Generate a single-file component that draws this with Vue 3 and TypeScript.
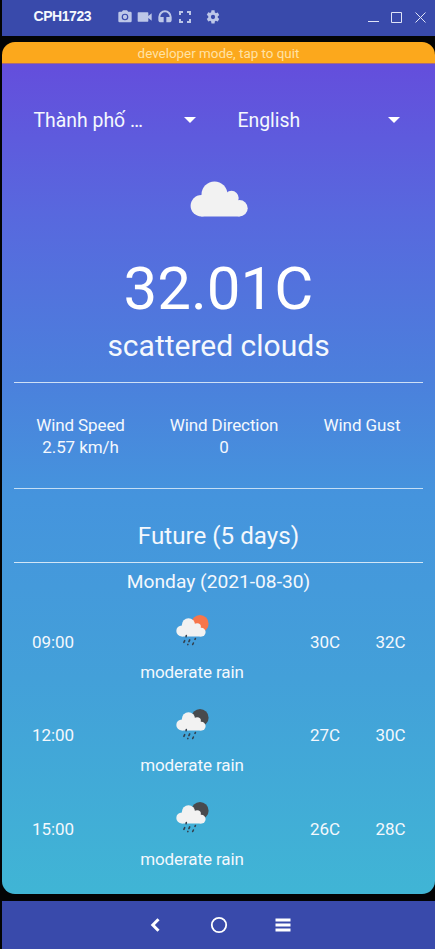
<script setup lang="ts">
interface Forecast {
  time: string
  low: string
  high: string
  summary: string
  disc: 'sun' | 'moon'
}

interface WindStat {
  label: string
  value: string
}

const wind: WindStat[] = [
  { label: 'Wind Speed', value: '2.57 km/h' },
  { label: 'Wind Direction', value: '0' },
  { label: 'Wind Gust', value: '' },
]

const forecasts: Forecast[] = [
  { time: '09:00', low: '30C', high: '32C', summary: 'moderate rain', disc: 'sun' },
  { time: '12:00', low: '27C', high: '30C', summary: 'moderate rain', disc: 'moon' },
  { time: '15:00', low: '26C', high: '28C', summary: 'moderate rain', disc: 'moon' },
]
</script>

<template>
  <div class="window">
    <header class="titlebar">
      <span class="device">CPH1723</span>
      <div class="tools">
        <svg class="tool" viewBox="0 0 24 24"><path d="M9 2 7.200 4H4a2 2 0 0 0-2 2v12a2 2 0 0 0 2 2h16a2 2 0 0 0 2-2V6a2 2 0 0 0-2-2h-3.200L15 2H9zm3 15a5 5 0 1 1 0-10 5 5 0 0 1 0 10zm0-1.800a3.200 3.200 0 1 0 0-6.400 3.200 3.200 0 0 0 0 6.400z" /></svg>
        <svg class="tool" viewBox="0 0 24 24"><path d="M17 10.500V6a1 1 0 0 0-1-1H2a1 1 0 0 0-1 1v12a1 1 0 0 0 1 1h14a1 1 0 0 0 1-1v-4.500l5 4V6.500z" /></svg>
        <svg class="tool" viewBox="0 0 24 24"><path d="M12 2a10 10 0 0 0-10 10v4a4 4 0 0 0 4 4h4v-8H5a7 7 0 0 1 14 0h-5v8h4a4 4 0 0 0 4-4v-4A10 10 0 0 0 12 2z" /></svg>
        <svg class="tool" viewBox="0 0 24 24"><path d="M3 3h6v3H6v3H3zM15 3h6v6h-3V6h-3zM3 15h3v3h3v3H3zM18 15h3v6h-6v-3h3z" /></svg>
        <svg class="tool gear" viewBox="0 0 24 24"><path d="M19.140 12.940c.04-.3.060-.61.060-.94s-.02-.64-.07-.94l2.030-1.580a.49.49 0 0 0 .12-.61l-1.920-3.320a.49.49 0 0 0-.59-.22l-2.390.96a7 7 0 0 0-1.620-.94l-.36-2.540A.48.48 0 0 0 13.920 2h-3.840a.48.48 0 0 0-.47.410l-.36 2.540c-.59.240-1.130.570-1.620.940l-2.390-.96a.48.48 0 0 0-.59.220L2.740 8.470a.48.48 0 0 0 .12.610l2.030 1.580a7.500 7.500 0 0 0 0 2.280l-2.030 1.580a.49.49 0 0 0-.12.610l1.920 3.320c.12.220.370.290.590.220l2.390-.96c.5.380 1.030.700 1.620.940l.36 2.540c.05.240.240.410.480.410h3.840c.24 0 .44-.17.470-.41l.36-2.540a7 7 0 0 0 1.620-.94l2.390.96c.22.080.470 0 .59-.22l1.920-3.320a.48.48 0 0 0-.12-.61zM12 15.200a3.200 3.200 0 1 1 0-6.400 3.200 3.200 0 0 1 0 6.400z" /></svg>
      </div>
      <svg class="controls" viewBox="0 0 60 12"><path d="M0 9.500h11M23.500.500h10v10h-10zM47.500.500l10 10m0-10-10 10" /></svg>
    </header>

    <main class="screen">
      <div class="notice">developer mode, tap to quit</div>
      <div class="content">
        <div class="pickers">
          <div class="picker city"><span>Thành phố …</span><i class="caret"></i></div>
          <div class="picker lang"><span>English</span><i class="caret"></i></div>
        </div>

        <svg class="current-icon" viewBox="0 0 58 36">
          <g class="cloud">
            <circle cx="11.300" cy="24.800" r="10.700" />
            <circle cx="24.500" cy="13.500" r="13" />
            <circle cx="41.500" cy="17" r="7.200" />
            <circle cx="49.500" cy="27.300" r="8.200" />
            <path d="M11.300 17h33l5.200 8v10.500H11.300z" />
          </g>
        </svg>
        <div class="temperature">32.01C</div>
        <div class="condition">scattered clouds</div>

        <section class="wind">
          <div v-for="stat in wind" :key="stat.label" class="stat">
            <span>{{ stat.label }}</span>
            <span>{{ stat.value }}</span>
          </div>
        </section>

        <h2 class="future">Future (5 days)</h2>
        <h3 class="day">Monday (2021-08-30)</h3>

        <div v-for="item in forecasts" :key="item.time" class="row">
          <span class="time">{{ item.time }}</span>
          <div class="weather">
            <svg class="rain-icon" viewBox="0 0 33 31">
              <circle :class="item.disc" cx="24" cy="8.700" r="8.600" />
              <g class="cloud">
                <circle cx="5.800" cy="15.900" r="5.500" />
                <circle cx="12.500" cy="9.900" r="6.700" />
                <circle cx="21.200" cy="11.900" r="3.700" />
                <circle cx="25.300" cy="17.100" r="4.300" />
                <path d="M5.800 12h16.900l2.600 4v5.400H5.800z" />
              </g>
              <path class="drops" d="m10.300 20.600-.2 1M8.700 25.700l-.8 1.700M13.700 24.900l-.8 1.700M19.400 23.500l-.4.800M11.900 29.400l-.1.200M17.400 28l-.7 1.500" />
            </svg>
            <span>{{ item.summary }}</span>
          </div>
          <span class="low">{{ item.low }}</span>
          <span class="high">{{ item.high }}</span>
        </div>
      </div>
    </main>

    <nav class="navbar">
      <svg viewBox="0 0 20 20"><path class="back" d="M13.500 4.200 7.800 10l5.700 5.800" /></svg>
      <svg viewBox="0 0 20 20"><circle class="home" cx="10" cy="10" r="7.200" /></svg>
      <svg viewBox="0 0 20 20"><path class="menu" d="M2.500 5h15M2.500 10h15M2.500 15h15" /></svg>
    </nav>
  </div>
</template>

<style>
body {
  background: #030405;
}
</style>

<style scoped>
.window {
  box-sizing: border-box;
  width: 435px;
  height: 949px;
  padding-left: 2px;
  display: flex;
  flex-direction: column;
  overflow: hidden;
  background: #030405;
  color: #f4f8fd;
  font-family: Roboto, sans-serif;
}

.titlebar {
  height: 36px;
  flex: none;
  display: flex;
  align-items: center;
  background: #394aab;
  padding: 0 7px 3px 31.500px;
  box-sizing: border-box;
}

.device {
  width: 83.500px;
  font: bold 14px/20px "Liberation Sans", Arial, sans-serif;
  letter-spacing: -0.45px;
  padding-bottom: 2px;
}

.tools {
  display: flex;
  gap: 4px;
  flex: 1;
}

.tool {
  width: 16px;
  height: 16px;
  fill: #bdc7e8;
}

.gear {
  margin-left: 8px;
}

.controls {
  width: 60px;
  height: 12px;
  margin-top: 3px;
  fill: none;
  stroke: #dfe4f7;
}

.screen {
  height: 852px;
  flex: none;
  margin: 6px 0 7px;
  display: flex;
  flex-direction: column;
  border-radius: 13px;
  overflow: hidden;
}

.notice {
  height: 22px;
  flex: none;
  box-sizing: border-box;
  padding-top: 1px;
  background: #fca81c;
  border-bottom: 1px solid #a86b7c;
  color: #ffe2a6;
  font-size: 13.4px;
  line-height: 22px;
  text-align: center;
}

.content {
  flex: 1;
  padding: 0 12px;
  background: linear-gradient(#644edc 0%, #5868de 18%, #4b80dc 38%, #4594dd 52%, #43a0d9 74%, #40b5d5 100%);
}

.pickers {
  display: flex;
  padding: 42px 0 0 19.500px;
  font-size: 19.4px;
  line-height: 28px;
}

.picker {
  display: flex;
  align-items: center;
  justify-content: space-between;
}

.picker span {
  padding-top: 1px;
  height: 27px;
}

.city {
  width: 162.500px;
}

.lang {
  width: 162.500px;
  margin-left: 41.500px;
}

.caret {
  border: 6px solid transparent;
  border-top-color: #fff;
  border-bottom: 0;
}

.current-icon {
  display: block;
  width: 58px;
  height: 36px;
  margin: 47px 0 0 176px;
}

.cloud {
  fill: #f2f2f2;
}

.temperature {
  margin-top: 36px;
  font-size: 60px;
  line-height: 72px;
  text-align: center;
  color: #fff;
}

.condition {
  height: 57px;
  font-size: 30px;
  line-height: 42px;
  text-align: center;
}

.wind {
  height: 105px;
  display: grid;
  grid-template-columns: 133px 154px 122px;
  border-top: 1px solid #cfe0f6;
  border-bottom: 1px solid #c4def5;
}

.stat {
  padding-top: 31px;
  display: flex;
  flex-direction: column;
  align-items: center;
  font-size: 17px;
  letter-spacing: -0.1px;
  line-height: 22px;
}

.future {
  margin: 0;
  height: 73px;
  border-bottom: 1px solid #d2e6f7;
  font-size: 24.2px;
  font-weight: 400;
  line-height: 94px;
  text-align: center;
}

.day {
  margin: 0;
  height: 38.300px;
  font-size: 19.2px;
  font-weight: 400;
  line-height: 38px;
  text-align: center;
}

.row {
  height: 93.500px;
  display: grid;
  grid-template-columns: 78px 200px 66px 65px;
  font-size: 17px;
  letter-spacing: -0.1px;
  line-height: 22px;
  text-align: center;
}

.time,
.low,
.high {
  padding-top: 29.700px;
}

.weather {
  display: flex;
  flex-direction: column;
  align-items: center;
}

.rain-icon {
  width: 33px;
  height: 31px;
  margin: 14px 0 14.300px;
}

.sun {
  fill: #f7764b;
}

.moon {
  fill: #484a4d;
}

.drops {
  fill: none;
  stroke: #333f4d;
  stroke-width: 1.600;
  stroke-linecap: round;
}

.navbar {
  height: 48px;
  flex: none;
  display: flex;
  align-items: center;
  justify-content: center;
  gap: 44px;
  background: #394aab;
}

.navbar svg {
  width: 20px;
  height: 20px;
  fill: none;
  stroke: #fff;
}

.back {
  stroke-width: 3;
}

.home {
  stroke-width: 1.800;
}

.menu {
  stroke-width: 2.800;
}
</style>
